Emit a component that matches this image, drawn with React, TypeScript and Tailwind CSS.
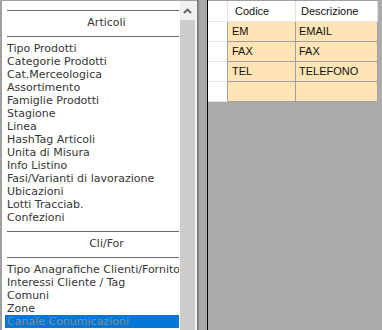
import React from "react";

const articoli = [
  "Tipo Prodotti",
  "Categorie Prodotti",
  "Cat.Merceologica",
  "Assortimento",
  "Famiglie Prodotti",
  "Stagione",
  "Linea",
  "HashTag Articoli",
  "Unita di Misura",
  "Info Listino",
  "Fasi/Varianti di lavorazione",
  "Ubicazioni",
  "Lotti Tracciab.",
  "Confezioni",
];

const cliFor = [
  "Tipo Anagrafiche Clienti/Fornitori",
  "Interessi Cliente / Tag",
  "Comuni",
  "Zone",
  "Canale Conumicazioni",
];

const rows = [
  ["EM", "EMAIL"],
  ["FAX", "FAX"],
  ["TEL", "TELEFONO"],
  ["", ""],
];

function Header({ label }: { label: string }) {
  return (
    <div className="mt-[7px] mb-[5px] ml-[2px]">
      <div className="h-px bg-[#6a6a6a]" />
      <div className="h-[25px] flex items-center justify-center pl-[27px] whitespace-nowrap">
        {label}
      </div>
      <div className="h-px bg-[#6a6a6a]" />
    </div>
  );
}

function Item({ label, selected }: { label: string; selected?: boolean }) {
  return (
    <div
      className={
        selected
          ? "h-[13px] leading-[13px] px-[2px] whitespace-nowrap overflow-hidden bg-[#0078d7] text-[#8c8c8c]"
          : "h-[13px] leading-[13px] px-[2px] whitespace-nowrap overflow-hidden"
      }
    >
      {label}
    </div>
  );
}

export default function App() {
  return (
    <div className="w-[382px] h-[330px] flex overflow-hidden bg-[#ababab]">
      {/* Left list panel */}
      <div className="w-[197px] h-full flex bg-white border-l-2 border-t border-[#a0a0a0]">
        <div
          className="flex-1 min-w-0 pl-[3px] pr-px pt-[2px] overflow-hidden text-[11px] text-[#363636]"
          style={{ fontFamily: '"DejaVu Sans", sans-serif' }}
        >
          <Header label="Articoli" />
          {articoli.map((a) => (
            <Item key={a} label={a} />
          ))}
          <Header label="Cli/For" />
          {cliFor.map((a, i) => (
            <Item key={a} label={a} selected={i === cliFor.length - 1} />
          ))}
        </div>
        {/* scrollbar */}
        <div className="w-[15px] h-full flex flex-col bg-[#cdcdcd]">
          <div className="h-[19px] bg-[#f0f0f0] flex items-center justify-center">
            <svg width="9" height="6" viewBox="0 0 9 6">
              <path d="M1 5 L4.5 1.5 L8 5" fill="none" stroke="#606060" strokeWidth="1.8" />
            </svg>
          </div>
        </div>
        <div className="w-[2px] h-full bg-[#f0f0f0]" />
      </div>
      {/* splitter */}
      <div className="w-[2px] h-full bg-[#808080]" />
      <div className="w-[8px] h-full bg-[#a9a9a9]" />
      <div className="w-px h-full bg-black" />
      {/* right grid area */}
      <div className="flex-1 h-full">
        <div
          className="w-[170px] border-t border-[#a0a0a0] grid grid-cols-[20px_68px_82px] text-[11px] text-[#111111]"
          style={{ fontFamily: '"Liberation Sans", Arial, sans-serif' }}
        >
          <div className="h-[21px] bg-white border-r border-b border-[#e3e3e3]" />
          <div className="h-[21px] bg-white border-r border-b border-[#e3e3e3] flex items-center pl-[7px]">
            Codice
          </div>
          <div className="h-[21px] bg-white border-r border-b border-[#e3e3e3] flex items-center pl-[5px]">
            Descrizione
          </div>
          {rows.map((r, i) => (
            <React.Fragment key={i}>
              <div className="h-[20px] bg-white border-r border-b border-r-[#a0a0a0] border-b-[#e3e3e3]" />
              <div className="h-[20px] bg-[#ffe4b5] border-r border-b border-[#a0a0a0] flex items-center pl-[4px]">
                {r[0]}
              </div>
              <div className="h-[20px] bg-[#ffe4b5] border-r border-b border-[#a0a0a0] flex items-center pl-[3px]">
                {r[1]}
              </div>
            </React.Fragment>
          ))}
        </div>
      </div>
    </div>
  );
}
